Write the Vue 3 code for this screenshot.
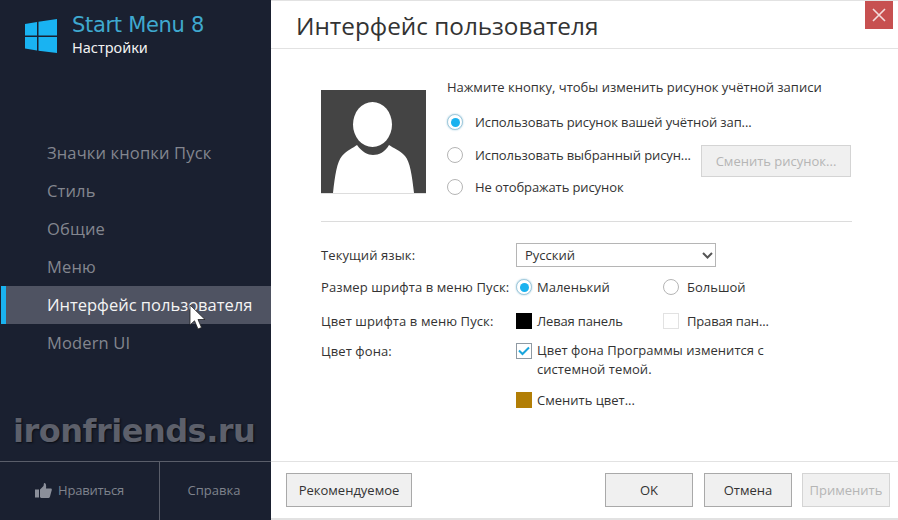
<script setup>
const nav = ['Значки кнопки Пуск', 'Стиль', 'Общие', 'Меню', 'Интерфейс пользователя', 'Modern UI']
const activeNav = 4
const pictureOptions = [
  { label: 'Использовать рисунок вашей учётной зап...', on: true },
  { label: 'Использовать выбранный рисун...', on: false, button: true },
  { label: 'Не отображать рисунок', on: false }
]
</script>

<template>
  <div class="app">
    <aside class="side">
      <div class="brand">
        <svg class="logo" width="32" height="34" viewBox="0 0 32 34">
          <path fill="#19b3f2" d="M0 5 12 3V16.500H0ZM13.500 2.800 32 0V16.500H13.500ZM0 18H12V31.500L0 29.500ZM13.500 18H32V34L13.500 31.700Z" />
        </svg>
        <div>
          <div class="brand-name">Start Menu 8</div>
          <div class="brand-sub">Настройки</div>
        </div>
      </div>
      <nav class="nav">
        <div v-for="(item, i) in nav" :key="item" class="nav-item" :class="{ active: i === activeNav }">{{ item }}</div>
      </nav>
      <div class="mark">ironfriends.ru</div>
      <div class="side-foot">
        <div class="foot-cell like">
          <svg width="17" height="15" viewBox="0 0 17 15">
            <path fill="#8b8f9a" d="M0 6.500H4V14.500H0ZM5 6.500 8.500 3 9 0C11 0 11.500 2 11 5.500H16C17 5.500 17 7 16.500 8L15 13.500C14.700 14.500 14 15 13 15H7C6 15 5 14.500 5 14Z" />
          </svg>
          <span class="like-text">Нравиться</span>
        </div>
        <div class="foot-cell help">Справка</div>
      </div>
      <svg class="cursor" width="18" height="26" viewBox="0 0 18 26">
        <path fill="#fff" stroke="#222" stroke-width=".8" d="M1 1V21L5.500 16.800 9 25 12.500 23.500 9 15.500H16Z" />
      </svg>
    </aside>

    <main class="main">
      <header class="head">
        <h1>Интерфейс пользователя</h1>
        <div class="close">
          <svg width="14" height="14" viewBox="0 0 14 14"><path stroke="#f3dcdc" stroke-width="1.600" d="M1 1 13 13M13 1 1 13" /></svg>
        </div>
      </header>

      <section class="content">
        <div class="picture">
          <svg class="avatar" width="105" height="104" viewBox="0 0 105 104">
            <rect width="105" height="104" fill="#444" />
            <rect y="103" width="105" height="1" fill="#ddd" />
            <ellipse cx="51.500" cy="34.500" rx="19.500" ry="22.500" fill="#fff" />
            <path fill="#fff" d="M12 103C14 85 16 72 21 66 26 60 32 58 36 55 41 62 47 65 52 65 58 65 64 62 68 55 72 58 79 60 84 66 89 72 91 85 93 103Z" />
          </svg>
          <div class="picture-opts">
            <p class="hint">Нажмите кнопку, чтобы изменить рисунок учётной записи</p>
            <div v-for="o in pictureOptions" :key="o.label" class="opt">
              <span class="radio" :class="{ on: o.on }"></span>
              <span class="opt-label">{{ o.label }}</span>
              <button v-if="o.button" class="btn change" disabled>Сменить рисунок...</button>
            </div>
          </div>
        </div>

        <div class="form">
          <div class="lbl r1">Текущий язык:</div>
          <div class="r1 select-wrap">
            <select class="select"><option>Русский</option></select>
            <svg class="chev" width="11" height="7" viewBox="0 0 11 7"><path fill="none" stroke="#555" stroke-width="2" d="M1 1 5.500 5.500 10 1" /></svg>
          </div>

          <div class="lbl r2">Размер шрифта в меню Пуск:</div>
          <div class="pair r2">
            <div class="ctl"><span class="radio on"></span><span>Маленький</span></div>
            <div class="ctl"><span class="radio"></span><span class="gap-l">Большой</span></div>
          </div>

          <div class="lbl r3">Цвет шрифта в меню Пуск:</div>
          <div class="pair r3">
            <div class="ctl"><span class="swatch black"></span><span class="tight">Левая панель</span></div>
            <div class="ctl"><span class="swatch white"></span><span class="gap-l tight">Правая пан...</span></div>
          </div>

          <div class="lbl r4">Цвет фона:</div>
          <div class="r4 bg-col">
            <div class="check-row">
              <span class="check">
                <svg width="12" height="10" viewBox="0 0 12 10"><path fill="none" stroke="#19a5dc" stroke-width="2" d="M1 4.500 4.500 8 11 1.500" /></svg>
              </span>
              <span class="check-text">Цвет фона Программы изменится с системной темой.</span>
            </div>
            <div class="ctl change-color"><span class="swatch gold"></span><span>Сменить цвет...</span></div>
          </div>
        </div>
      </section>

      <footer class="foot">
        <button class="btn rec">Рекомендуемое</button>
        <div class="foot-right">
          <button class="btn act">OK</button>
          <button class="btn act cancel">Отмена</button>
          <button class="btn act" disabled>Применить</button>
        </div>
      </footer>
    </main>
  </div>
</template>

<style>
html, body { margin: 0; background: #fff; }
</style>

<style scoped>
.app {
  position: relative;
  display: flex;
  width: 898px;
  height: 520px;
  overflow: hidden;
  font-family: "Open Sans", "Noto Sans", sans-serif;
  font-size: 13px;
  color: #333;
  background: #fff;
}
.side {
  position: relative;
  display: flex;
  flex-direction: column;
  flex: none;
  width: 271px;
  height: 520px;
  background: #1a2030;
}
.brand {
  display: flex;
  gap: 15px;
  height: 134px;
  box-sizing: border-box;
  padding: 12px 0 0 25px;
}
.logo { margin-top: 7px; }
.brand-name {
  font-family: "DejaVu Sans", sans-serif;
  font-size: 21px;
  line-height: 26px;
  letter-spacing: -0.300px;
  color: #3fa9cf;
}
.brand-sub {
  font-family: "Noto Sans", sans-serif;
  font-size: 14.500px;
  line-height: 18px;
  color: #f2f2f2;
}
.nav-item {
  height: 38px;
  box-sizing: border-box;
  padding-left: 47px;
  font-size: 16.500px;
  line-height: 38px;
  letter-spacing: 0.150px;
  color: #83868f;
}
.nav-item.active {
  margin-left: 1px;
  padding-left: 41px;
  border-left: 5px solid #1ab2ef;
  background: #4f5362;
  color: #f4f4f4;
  letter-spacing: 0;
}
.mark {
  flex: 1;
  padding: 49px 0 0 13px;
  font-family: "DejaVu Sans", sans-serif;
  font-weight: 700;
  font-size: 32px;
  line-height: 40px;
  letter-spacing: -0.500px;
  color: #5d606b;
  text-shadow: 1px 1px 2px #0a0d14;
}
.side-foot {
  display: flex;
  height: 59px;
  box-sizing: border-box;
  border-top: 1px solid #5a5e6a;
}
.foot-cell {
  display: flex;
  align-items: center;
  justify-content: center;
  padding-bottom: 2px;
  font-size: 13px;
  color: #7f838d;
}
.like {
  gap: 6px;
  width: 160px;
  border-right: 1px solid #5a5e6a;
  box-sizing: border-box;
}
.like-text { letter-spacing: -0.200px; }
.help { flex: 1; padding-right: 3px; }
.cursor {
  position: absolute;
  left: 189px;
  top: 304px;
}

.main {
  display: flex;
  flex-direction: column;
  flex: 1;
  min-width: 0;
  border-top: 1px solid #e2e2e2;
}
.head {
  position: relative;
  height: 47px;
  border-bottom: 1px solid #e2e2e2;
}
h1 {
  margin: 0;
  padding: 8px 0 0 25px;
  font-weight: 400;
  font-size: 24.300px;
  line-height: 34px;
  color: #333;
}
.close {
  position: absolute;
  top: 0;
  right: 5px;
  display: flex;
  align-items: center;
  justify-content: center;
  width: 28px;
  height: 28px;
  background: #c75050;
}
.content {
  flex: 1;
  padding: 0 46px 0 50px;
}
.picture {
  display: flex;
  gap: 21px;
  height: 173px;
  box-sizing: border-box;
  padding-top: 41px;
  border-bottom: 1px solid #dcdcdc;
}
.avatar { display: block; flex: none; }
.picture-opts { flex: 1; margin-top: -13px; }
.hint { margin: 0 0 9px; line-height: 20px; }
.opt {
  position: relative;
  display: flex;
  align-items: center;
  height: 32.500px;
  gap: 12px;
}
.opt-label { letter-spacing: -0.100px; }
.radio {
  position: relative;
  flex: none;
  width: 14px;
  height: 14px;
  border: 1px solid #b5b5b5;
  border-radius: 50%;
  background: #fff;
}
.radio.on {
  border-color: #9fc9dc;
  box-shadow: 0 0 2px #9fc9dc;
}
.radio.on::after {
  content: "";
  position: absolute;
  inset: 2.500px;
  border-radius: 50%;
  background: #1ab2ef;
}
.btn {
  box-sizing: border-box;
  border: 1px solid #a9a9a9;
  background: #f0f0f0;
  font: inherit;
  color: #333;
  padding: 0;
}
.btn:disabled {
  border-color: #d4d4d4;
  color: #b5b5b5;
}
.change {
  position: absolute;
  left: 254px;
  top: 6px;
  width: 150px;
  height: 32px;
  border-color: #bdbdbd;
}
.form {
  display: grid;
  grid-template-columns: 195px 1fr;
  grid-template-rows: 34px 30px 38px auto;
  padding-top: 16px;
}
.lbl { line-height: 20px; letter-spacing: 0.100px; }
.r1, .r2, .r3 { align-self: center; }
.r4.lbl { align-self: start; margin-top: 1px; }
.select-wrap {
  position: relative;
  width: 200px;
  height: 24px;
}
.select {
  display: block;
  width: 100%;
  height: 24px;
  box-sizing: border-box;
  padding: 0 0 0 8px;
  border: 1px solid #b5b5b5;
  border-radius: 0;
  appearance: none;
  background: #fff;
  font: inherit;
  color: #333;
}
.chev {
  position: absolute;
  right: 3px;
  top: 9px;
  pointer-events: none;
}
.pair {
  display: grid;
  grid-template-columns: 147px 1fr;
}
.ctl {
  display: flex;
  align-items: center;
  gap: 5px;
  line-height: 20px;
}
.gap-l { margin-left: 3px; }
.tight { letter-spacing: -0.150px; }
.swatch {
  flex: none;
  width: 16px;
  height: 16px;
}
.black { background: #000; }
.white { box-sizing: border-box; border: 1px solid #e2e2e2; background: #fff; }
.gold { background: #b27e06; }
.bg-col { padding-top: 1px; }
.check-row {
  display: flex;
  align-items: flex-start;
  gap: 5px;
  line-height: 19px;
}
.check {
  display: flex;
  flex: none;
  align-items: center;
  justify-content: center;
  box-sizing: border-box;
  width: 16px;
  height: 16px;
  margin-top: 2px;
  border: 1px solid #8f9aa3;
}
.check-text { width: 250px; letter-spacing: 0.050px; }
.change-color { margin-top: 11px; }
.foot {
  display: flex;
  justify-content: space-between;
  flex: none;
  height: 59px;
  box-sizing: border-box;
  padding: 11px 8px 0 15px;
  border-top: 1px solid #e2e2e2;
  border-bottom: 2px solid #e2e2e2;
}
.rec { width: 126px; height: 34px; }
.foot-right { display: flex; gap: 10px; }
.act { width: 88px; height: 34px; }
.cancel { margin-left: 1px; }
</style>
